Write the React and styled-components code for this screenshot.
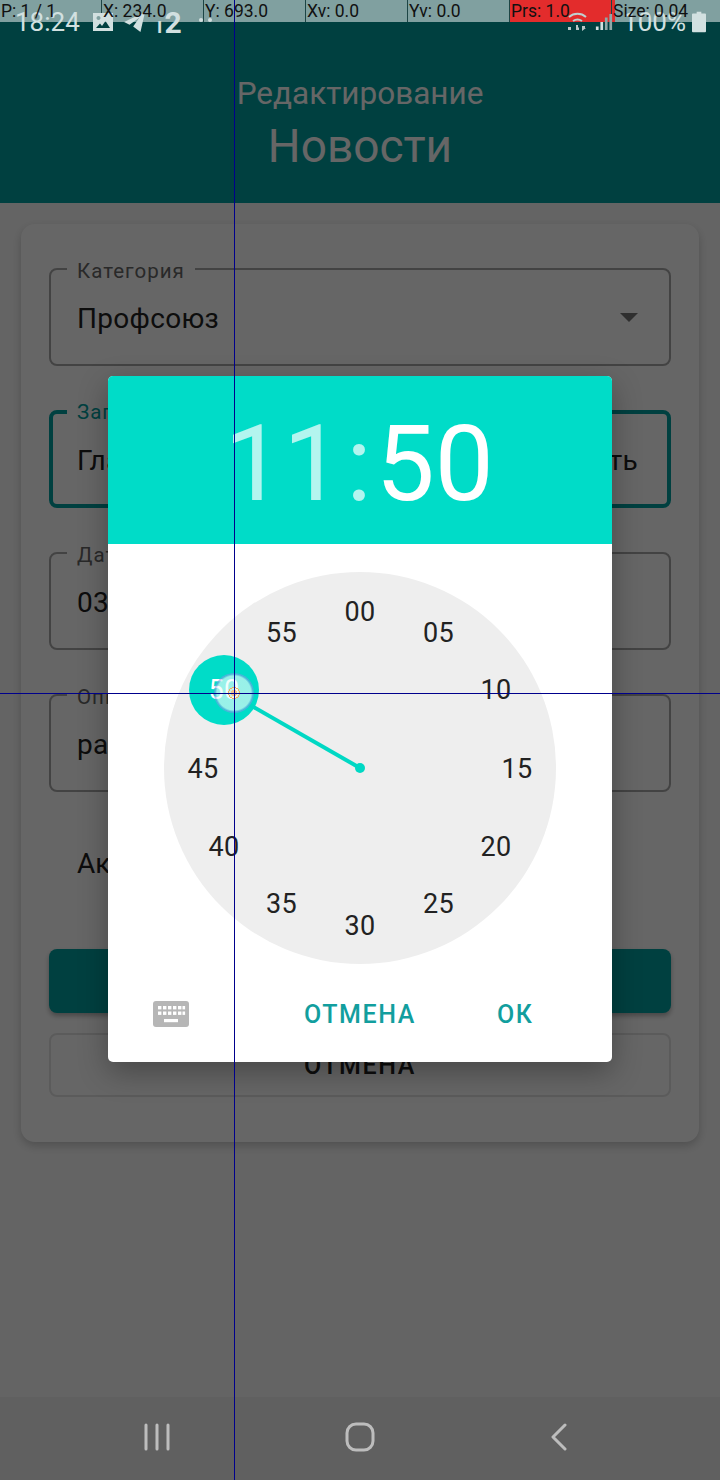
import React from 'react';
import styled, {createGlobalStyle} from 'styled-components';

const GlobalStyle = createGlobalStyle`
  html, body {
    margin: 0;
    padding: 0;
    background: #fff;
  }
  * {
    box-sizing: border-box;
  }
  body {
    font-family: Roboto, "Noto Sans", "Liberation Sans", sans-serif;
  }
`;

const debugCells = [
  {text: 'P: 1 / 1'},
  {text: 'X: 234.0'},
  {text: 'Y: 693.0'},
  {text: 'Xv: 0.0'},
  {text: 'Yv: 0.0'},
  {text: 'Prs: 1.0', alert: true},
  {text: 'Size: 0.04'}
];

const minutes = ['00', '05', '10', '15', '20', '25', '30', '35', '40', '45', '50', '55'];

const fields = [
  {label: 'Категория', value: 'Профсоюз', select: true},
  {label: 'Заголовок', value: 'Главное о работе союза: главная новость', focused: true},
  {label: 'Дата', value: '03.02.2021 11:50'},
  {label: 'Описание', value: 'рассылка новостей'}
];

function App() {
  return (
    <Screen>
      <GlobalStyle />
      <AppBar>
        <Subtitle>Редактирование</Subtitle>
        <Title>Новости</Title>
      </AppBar>
      <Card>
        {fields.map((field) => (
          <Field key={field.label} $focused={field.focused}>
            <FieldLabel $focused={field.focused}>{field.label}</FieldLabel>
            <FieldValue>{field.value}</FieldValue>
            {field.select && <SelectArrow />}
          </Field>
        ))}
        <SwitchRow>Актуально</SwitchRow>
        <SaveButton>Сохранить</SaveButton>
        <CancelButton>Отмена</CancelButton>
      </Card>

      <Scrim />

      <Dialog>
        <TimeHeader>
          <TimePart $dim>11</TimePart>
          <TimeColon>:</TimeColon>
          <TimePart>50</TimePart>
        </TimeHeader>
        <DialArea>
          <Dial>
            <DialHand viewBox="0 0 392 392">
              <circle cx="60" cy="118" r="35" fill="#00dcc8" />
              <line x1="196" y1="196" x2="60" y2="118" stroke="#00d8c4" strokeWidth="4" />
              <circle cx="196" cy="196" r="5" fill="#00d8c4" />
            </DialHand>
            {minutes.map((minute, index) => {
              const angle = (index * 30 * Math.PI) / 180;
              return (
                <DialNumber
                  key={minute}
                  $active={minute === '50'}
                  style={{
                    left: 196 + 157 * Math.sin(angle),
                    top: Math.floor(197 - 157 * Math.cos(angle))
                  }}
                >
                  {minute}
                </DialNumber>
              );
            })}
          </Dial>
        </DialArea>
        <DialogActions>
          <KeyboardIcon viewBox="0 0 36 26">
            <rect width="36" height="26" rx="3" fill="#b6b6b6" />
            <g fill="#fff">
              <rect x="5" y="5" width="3.4" height="3.4" />
              <rect x="10" y="5" width="3.4" height="3.4" />
              <rect x="15" y="5" width="3.4" height="3.4" />
              <rect x="20" y="5" width="3.4" height="3.4" />
              <rect x="25" y="5" width="3.4" height="3.4" />
              <rect x="29.5" y="5" width="2.6" height="3.4" />
              <rect x="5" y="10.5" width="3.4" height="3.4" />
              <rect x="10" y="10.5" width="3.4" height="3.4" />
              <rect x="15" y="10.5" width="3.4" height="3.4" />
              <rect x="20" y="10.5" width="3.4" height="3.4" />
              <rect x="25" y="10.5" width="3.4" height="3.4" />
              <rect x="29.5" y="10.5" width="2.6" height="3.4" />
              <rect x="11" y="18" width="14" height="3.2" />
            </g>
          </KeyboardIcon>
          <ActionButton>ОТМЕНА</ActionButton>
          <ActionButton>ОК</ActionButton>
        </DialogActions>
      </Dialog>

      <DebugStrip>
        {debugCells.map((cell) => (
          <DebugCell key={cell.text} $alert={cell.alert} />
        ))}
      </DebugStrip>

      <StatusBar>
        <StatusGroup>
          <StatusTime>18:24</StatusTime>
          <svg width="20" height="18" viewBox="0 0 20 18" fill="#d2e0e0">
            <path d="M0 0h20v18H0z M3 15h14l-4.500-7-3.500 5-2-2.500z M5.500 3a2 2 0 1 0 .01 0z" fillRule="evenodd" />
          </svg>
          <svg width="22" height="20" viewBox="0 0 24 22" fill="#d2e0e0">
            <path d="M23 0 0 11l6 3 11-8-7 10 8 6z" />
          </svg>
          <NotifyCount><small>ı</small>2</NotifyCount>
          <StatusDots>
            <i />
            <i />
          </StatusDots>
        </StatusGroup>
        <StatusGroup $right>
          <svg width="22" height="22" viewBox="0 0 22 22" fill="none">
            <path d="M2 6a13 13 0 0 1 17 0M6 10a8 8 0 0 1 9 0" stroke="#c0d0d0" strokeWidth="2" />
            <path d="M1 16h3v3H1zM9 14v5h3v-2.500h-1V14zM15 20v-5h3v2h1" fill="#b8c8c8" />
          </svg>
          <svg width="18" height="20" viewBox="0 0 20 20" fill="#d2e0e0">
            <path d="M1 15h3v4H1z M6 10h3v9H6z" />
            <path d="M11 5h3v14h-3z M16 1h3v18h-3z" fill="#8fa8a8" />
          </svg>
          <BatteryText>100%</BatteryText>
          <svg width="14" height="22" viewBox="0 0 15 22" fill="#d2e0e0">
            <path d="M5 0h5v2h4a1 1 0 0 1 1 1v18a1 1 0 0 1-1 1H1a1 1 0 0 1-1-1V3a1 1 0 0 1 1-1h4z" />
          </svg>
        </StatusGroup>
      </StatusBar>

      <DebugLabels>
        {debugCells.map((cell) => (
          <DebugLabel key={cell.text}>{cell.text}</DebugLabel>
        ))}
      </DebugLabels>

      <NavBar>
        <svg width="26" height="28" viewBox="0 0 26 28" stroke="#bdbdbd" strokeWidth="3" strokeLinecap="round">
          <path d="M2 2v24M13 2v24M24 2v24" />
        </svg>
        <svg width="30" height="30" viewBox="0 0 30 30" fill="none" stroke="#bdbdbd" strokeWidth="3">
          <rect x="2" y="2" width="26" height="26" rx="9" />
        </svg>
        <svg width="18" height="28" viewBox="0 0 18 28" fill="none" stroke="#bdbdbd" strokeWidth="3" strokeLinecap="round" strokeLinejoin="round">
          <path d="M15 2 3 14l12 12" />
        </svg>
      </NavBar>

      <TouchDot />
      <CrosshairX />
      <CrosshairY />
    </Screen>
  );
}

const Screen = styled.div`
  position: relative;
  width: 720px;
  height: 1480px;
  overflow: hidden;
  background: #fafafa;
  display: flex;
  flex-direction: column;
`;

const AppBar = styled.header`
  height: 203px;
  padding-top: 72px;
  background: #00a0a0;
  color: #fff;
  display: flex;
  flex-direction: column;
  align-items: center;
`;

const Subtitle = styled.div`
  font-size: 31.5px;
  line-height: 44px;
`;

const Title = styled.div`
  font-size: 46px;
  line-height: 60px;
`;

const Card = styled.section`
  margin: 21px 21px 0;
  height: 918px;
  padding: 44px 28px 0;
  background: #fff;
  border-radius: 14px;
  box-shadow: 0 4px 10px rgba(0, 0, 0, 0.2);
  display: flex;
  flex-direction: column;
`;

const Field = styled.div`
  position: relative;
  height: 98px;
  flex-shrink: 0;
  margin-bottom: 44px;
  padding: 2px ${(p) => (p.$focused ? 24 : 26)}px 0;
  border: ${(p) => (p.$focused ? '4px solid #00a0a0' : '2px solid #a8a8a8')};
  border-radius: 8px;
  display: flex;
  align-items: center;
  justify-content: space-between;
`;

const FieldLabel = styled.span`
  position: absolute;
  top: ${(p) => (p.$focused ? -14 : -11)}px;
  left: ${(p) => (p.$focused ? 14 : 16)}px;
  padding: 0 10px;
  background: #fff;
  font-size: 20.500px;
  line-height: 24px;
  letter-spacing: 1px;
  color: ${(p) => (p.$focused ? '#00a0a0' : '#666')};
`;

const FieldValue = styled.span`
  font-size: 28px;
  letter-spacing: 0.3px;
  color: #222;
  white-space: nowrap;
`;

const SelectArrow = styled.span`
  width: 0;
  height: 0;
  margin: -2px 5px 0 0;
  border-left: 9px solid transparent;
  border-right: 9px solid transparent;
  border-top: 9px solid #777;
`;

const SwitchRow = styled.div`
  height: 54px;
  flex-shrink: 0;
  padding-left: 28px;
  display: flex;
  align-items: center;
  font-size: 28px;
  color: #222;
`;

const SaveButton = styled.button`
  height: 64px;
  flex-shrink: 0;
  margin-top: 59px;
  border: 0;
  border-radius: 8px;
  background: #00a0a0;
  color: #fff;
  font: 500 26px Roboto, sans-serif;
  letter-spacing: 2px;
  text-transform: uppercase;
  box-shadow: 0 3px 5px rgba(0, 0, 0, 0.3);
`;

const CancelButton = styled.button`
  height: 64px;
  flex-shrink: 0;
  margin-top: 20px;
  padding-top: 2px;
  border: 2px solid #e4e4e4;
  border-radius: 8px;
  background: #fff;
  color: #222;
  font: 500 25px Roboto, sans-serif;
  letter-spacing: 1.600px;
  text-transform: uppercase;
`;

const Scrim = styled.div`
  position: absolute;
  inset: 0;
  background: rgba(0, 0, 0, 0.6);
`;

const Dialog = styled.div`
  position: absolute;
  top: 376px;
  left: 108px;
  width: 504px;
  height: 686px;
  background: #fff;
  border-radius: 5px;
  overflow: hidden;
  box-shadow: 0 10px 30px rgba(0, 0, 0, 0.3);
  display: flex;
  flex-direction: column;
`;

const TimeHeader = styled.div`
  height: 168px;
  padding: 8px 2px 0 0;
  background: #00dcc8;
  color: #fff;
  display: flex;
  align-items: center;
  justify-content: center;
  font-size: 105px;
  font-weight: 400;
`;

const TimePart = styled.span`
  opacity: ${(p) => (p.$dim ? 0.7 : 1)};
`;

const TimeColon = styled.span`
  margin: 0 4px;
  opacity: 0.7;
`;

const DialArea = styled.div`
  padding-top: 28px;
  display: flex;
  justify-content: center;
`;

const Dial = styled.div`
  position: relative;
  width: 392px;
  height: 392px;
  border-radius: 50%;
  background: #eeeeee;
`;

const DialHand = styled.svg`
  position: absolute;
  inset: 0;
  width: 392px;
  height: 392px;
`;

const DialNumber = styled.span`
  position: absolute;
  transform: translate(-50%, -50%);
  font-size: 27px;
  letter-spacing: 0.3px;
  color: ${(p) => (p.$active ? '#fff' : '#222')};
`;

const DialogActions = styled.div`
  flex: 1;
  padding: 2px 0 0 45px;
  display: flex;
  align-items: center;
`;

const KeyboardIcon = styled.svg`
  width: 36px;
  height: 26px;
  flex-shrink: 0;
  margin-right: 115px;
`;

const ActionButton = styled.span`
  margin-right: 81px;
  font-size: 25px;
  font-weight: 500;
  letter-spacing: 1.600px;
  color: #129e9e;
`;

const StatusBar = styled.div`
  position: absolute;
  top: 9px;
  left: 15px;
  right: 14px;
  height: 26px;
  display: flex;
  align-items: center;
  justify-content: space-between;
  color: #d2e0e0;
`;

const StatusGroup = styled.div`
  display: flex;
  align-items: center;
  gap: ${(p) => (p.$right ? 6 : 11)}px;
`;

const StatusTime = styled.span`
  margin-right: 2px;
  font-size: 26px;
`;

const NotifyCount = styled.span`
  font-size: 30px;
  font-weight: 700;
  small {
    margin-right: 2px;
    font-size: 22px;
    font-weight: 500;
  }
`;

const StatusDots = styled.span`
  display: flex;
  gap: 5px;
  margin-left: 6px;
  margin-top: -4px;
  i {
    width: 4px;
    height: 4px;
    border-radius: 50%;
    background: #d2e0e0;
  }
`;

const BatteryText = styled.span`
  margin-left: 4px;
  font-size: 26px;
`;

const debugGrid = `
  position: absolute;
  top: 0;
  left: 0;
  width: 100%;
  height: 22px;
  display: grid;
  grid-template-columns: repeat(6, 102px) 1fr;
`;

const DebugStrip = styled.div`
  ${debugGrid}
  background: rgba(255, 255, 255, 0.5);
`;

const DebugCell = styled.div`
  border-right: 1px solid #1d4545;
  background: ${(p) => (p.$alert ? '#e32c2c' : 'transparent')};
  box-shadow: ${(p) => (p.$alert ? '3px 0 0 #e32c2c' : 'none')};
  &:last-child {
    border-right: 0;
  }
`;

const DebugLabels = styled.div`
  ${debugGrid}
`;

const DebugLabel = styled.div`
  padding-left: 1px;
  font-size: 17.500px;
  line-height: 22px;
  color: #111;
  white-space: nowrap;
`;

const NavBar = styled.nav`
  position: absolute;
  left: 0;
  right: 0;
  bottom: 0;
  height: 83px;
  padding: 0 152px 4px 144px;
  background: #606060;
  display: flex;
  align-items: center;
  justify-content: space-between;
`;

const TouchDot = styled.div`
  position: absolute;
  top: 673px;
  left: 214px;
  width: 40px;
  height: 40px;
  border-radius: 50%;
  background: radial-gradient(circle, #f2c08a 0 3px, rgba(255, 245, 224, 0.8) 3px 5px, #f0a860 5px 6px, rgba(235, 252, 250, 0.65) 6px 17px, rgba(130, 150, 230, 0.55) 19px);
`;

const CrosshairX = styled.div`
  position: absolute;
  top: 0;
  bottom: 0;
  left: 234px;
  width: 1px;
  background: #00008c;
`;

const CrosshairY = styled.div`
  position: absolute;
  left: 0;
  right: 0;
  top: 693px;
  height: 1px;
  background: #00008c;
`;

export default App;
